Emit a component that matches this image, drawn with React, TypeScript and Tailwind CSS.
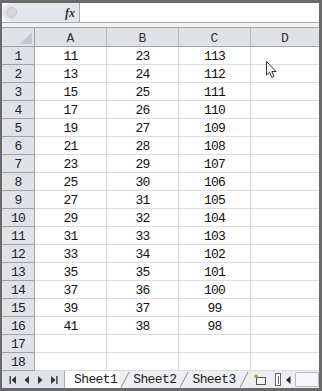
import React from "react";

const A = [11, 13, 15, 17, 19, 21, 23, 25, 27, 29, 31, 33, 35, 37, 39, 41];
const B = [23, 24, 25, 26, 27, 28, 29, 30, 31, 32, 33, 34, 35, 36, 37, 38];
const C = [113, 112, 111, 110, 109, 108, 107, 106, 105, 104, 103, 102, 101, 100, 99, 98];

function Slant() {
  return (
    <svg width="10" height="17" viewBox="0 0 10 17" className="shrink-0">
      <line x1="1" y1="16.5" x2="9" y2="1" stroke="#8a8f96" strokeWidth="1" />
    </svg>
  );
}

export default function App() {
  const rows = Array.from({ length: 18 }, (_, i) => i);
  return (
    <div className="w-[322px] h-[391px] bg-[#6a6a6a] pt-[3px] pl-[2px] pr-[3px] pb-[3px] overflow-hidden font-['Liberation_Mono','DejaVu_Sans_Mono',monospace]">
      <div className="relative w-[317px] h-[385px] bg-white flex flex-col">
        {/* formula bar */}
        <div className="h-[20px] flex border-b border-[#a9adb3] bg-white shrink-0">
          <div className="w-[78px] h-full bg-[#e3e6ea] rounded-l-[10px] border-r border-[#a9adb3] flex items-center justify-between pl-[4px] pr-[4px]">
            <div className="w-[11px] h-[11px] rounded-full bg-[#d2d5da] border border-[#c4c7cc]" />
            <span className="text-[12px] italic font-bold text-[#333] font-['Liberation_Serif',serif]">fx</span>
          </div>
          <div className="flex-1 bg-white" />
        </div>
        <div className="h-[5px] bg-[#f2f3f5] border-b border-[#a0a4aa] shrink-0" />
        {/* header row */}
        <div className="h-[19px] flex bg-[#dfe2e6] border-b border-[#9ea3aa] shrink-0 text-[13px] leading-none text-[#333]">
          <div className="w-[33px] border-r border-[#9ea3aa] relative">
            <svg width="12" height="12" className="absolute right-[2px] bottom-[2px]">
              <polygon points="12,0 12,12 0,12" fill="#c3c7cd" />
            </svg>
          </div>
          {["A", "B", "C"].map((c) => (
            <div key={c} className="w-[72px] border-r border-[#b3b7bd] flex items-center justify-center pt-[2px]">{c}</div>
          ))}
          <div className="flex-1 flex items-center justify-center pt-[2px]">D</div>
        </div>
        {/* rows */}
        <div className="flex flex-col shrink-0 text-[13px] leading-none text-[#111] tracking-[-0.8px]">
          {rows.map((i) => (
            <div key={i} className="h-[18px] shrink-0 flex">
              <div className="w-[33px] bg-[#dfe2e6] border-r border-b border-[#9ea3aa] flex items-center justify-center text-[#222] pt-px">{i + 1}</div>
              {[A, B, C].map((col, k) => (
                <div key={k} className="w-[72px] border-r border-b border-[#dadcdf] flex items-center justify-center pt-px">{col[i] ?? ""}</div>
              ))}
              <div className="flex-1 border-b border-[#dadcdf]" />
            </div>
          ))}
        </div>
        {/* tab bar */}
        <div className="h-[17px] shrink-0 flex items-stretch bg-[#eceef1] text-[13px] leading-none text-[#222] tracking-[-0.6px]">
          <div className="w-[63px] bg-[#dfe2e6] border-r border-[#a9adb3] flex items-center justify-around px-[3px]">
            <svg width="8" height="8" viewBox="0 0 8 8"><rect x="0.5" y="0" width="1.3" height="8" fill="#333" /><polygon points="7,0 7,8 2.5,4" fill="#333" /></svg>
            <svg width="6" height="8" viewBox="0 0 6 8"><polygon points="5,0 5,8 0.5,4" fill="#333" /></svg>
            <svg width="6" height="8" viewBox="0 0 6 8"><polygon points="1,0 1,8 5.5,4" fill="#333" /></svg>
            <svg width="8" height="8" viewBox="0 0 8 8"><polygon points="1,0 1,8 5.5,4" fill="#333" /><rect x="6.2" y="0" width="1.3" height="8" fill="#333" /></svg>
          </div>
          <div className="flex items-center bg-white pl-[9px] pr-[3px]">Sheet1</div>
          <Slant />
          <div className="flex items-center px-[3px]">Sheet2</div>
          <Slant />
          <div className="flex items-center px-[3px]">Sheet3</div>
          <Slant />
          <div className="w-[22px] flex items-center justify-center">
            <svg width="14" height="12" viewBox="0 0 14 12">
              <rect x="3.5" y="3.5" width="9" height="7" fill="#f4f5f7" stroke="#555" />
              <path d="M3 0.5 L3 4 M1.2 2.2 L4.8 2.2 M1.6 0.8 L4.4 3.6 M4.4 0.8 L1.6 3.6" stroke="#b08a2a" strokeWidth="1" />
            </svg>
          </div>
          <div className="flex-1" />
          <div className="w-[6px] my-[2px] border border-[#666] bg-white flex items-center justify-center">
            <div className="w-px h-[8px] bg-[#666]" />
          </div>
          <div className="w-[14px] flex items-center justify-center">
            <svg width="5" height="8" viewBox="0 0 5 8"><polygon points="4.5,0 4.5,8 0,4" fill="#222" /></svg>
          </div>
          <div className="w-[24px] my-[1px] bg-[#f5f6f8] border border-[#b5b9bf] rounded-[2px]" />
        </div>
        {/* cursor */}
        <svg width="12" height="18" viewBox="0 0 12 18" className="absolute left-[264px] top-[58px]">
          <path d="M0.5 0.5 L0.5 14 L3.6 11.2 L5.8 16.5 L7.9 15.6 L5.8 10.5 L10 10.5 Z" fill="white" stroke="#333" strokeWidth="1" strokeLinejoin="round" />
        </svg>
      </div>
    </div>
  );
}
